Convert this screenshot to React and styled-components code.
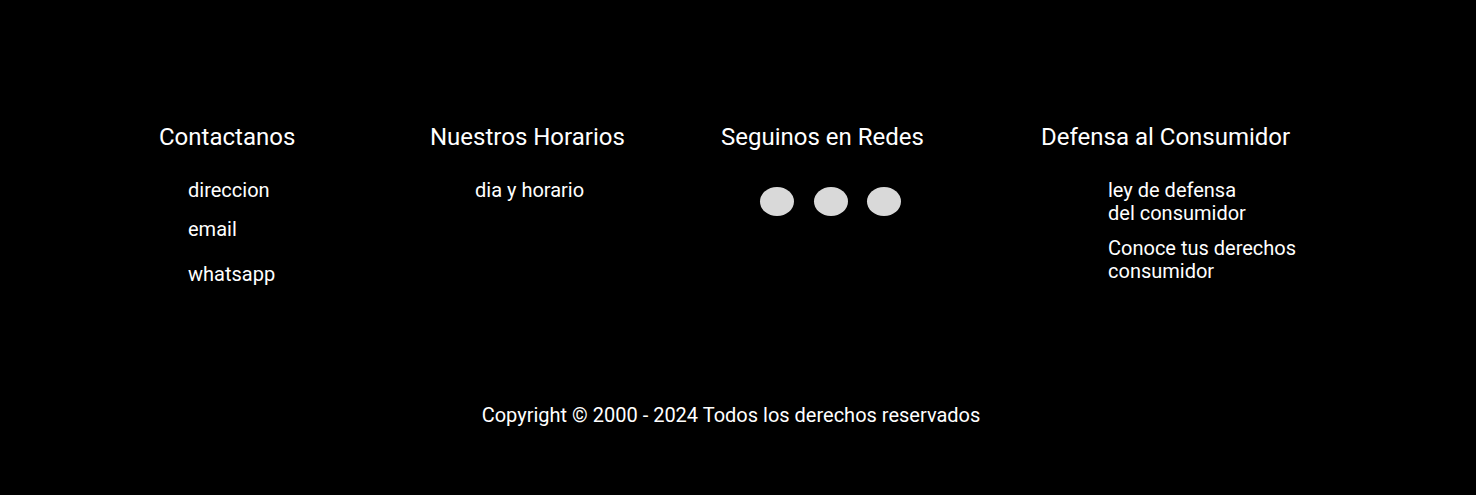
import { createGlobalStyle } from "styled-components";
import styled from "styled-components";

const GlobalStyle = createGlobalStyle`
    html, body {
        margin: 0;
        padding: 0;
        background-color: #000;
    }
    body {
        font-family: Roboto, "Liberation Sans", sans-serif;
        color: #fff;
    }
`;

const StyledFooter = styled.footer`
    display: flex;
    flex-direction: column;
    width: 1476px;
    height: 495px;
    box-sizing: border-box;
    padding-top: 123px;
    background-color: #000;
`;

const Columns = styled.div`
    display: flex;
    padding-left: 159px;
`;

const Column = styled.div`
    display: flex;
    flex-direction: column;
    width: ${props => props.width ? `${props.width}px` : "auto"};
    flex-shrink: 0;
`;

const Heading = styled.h3`
    margin: 0;
    font-size: 24px;
    font-weight: 400;
    line-height: normal;
    white-space: nowrap;
`;

const List = styled.ul`
    list-style: none;
    margin: 28px 0 0 0;
    padding: 0 0 0 ${props => props.indent}px;
    display: flex;
    flex-direction: column;
`;

const Item = styled.li`
    font-size: 20px;
    line-height: 23px;
    margin-top: ${props => props.space || 0}px;
`;

const Socials = styled.div`
    display: flex;
    gap: 19.5px;
    margin-top: 36px;
    padding-left: ${props => props.indent}px;
`;

const Dot = styled.span`
    display: block;
    width: 34px;
    height: 29px;
    border-radius: 50%;
    background-color: #d9d9d9;
`;

const Copyright = styled.p`
    margin: auto 0 0 0;
    padding: 0 14px 68px 0;
    text-align: center;
    font-size: 20px;
    line-height: normal;
`;

export default function App(){

    return (
        <>
        <GlobalStyle />
        <StyledFooter>
            <Columns>
                <Column width={271}>
                    <Heading>Contactanos</Heading>
                    <List indent={29}>
                        <Item>direccion</Item>
                        <Item space={16}>email</Item>
                        <Item space={22}>whatsapp</Item>
                    </List>
                </Column>
                <Column width={291}>
                    <Heading>Nuestros Horarios</Heading>
                    <List indent={45}>
                        <Item>dia y horario</Item>
                    </List>
                </Column>
                <Column width={320}>
                    <Heading>Seguinos en Redes</Heading>
                    <Socials indent={39}>
                        <Dot />
                        <Dot />
                        <Dot />
                    </Socials>
                </Column>
                <Column>
                    <Heading>Defensa al Consumidor</Heading>
                    <List indent={67}>
                        <Item>ley de defensa<br />del consumidor</Item>
                        <Item space={12}>Conoce tus derechos<br />consumidor</Item>
                    </List>
                </Column>
            </Columns>
            <Copyright>Copyright © 2000 - 2024 Todos los derechos reservados</Copyright>
        </StyledFooter>
        </>
    )
}
